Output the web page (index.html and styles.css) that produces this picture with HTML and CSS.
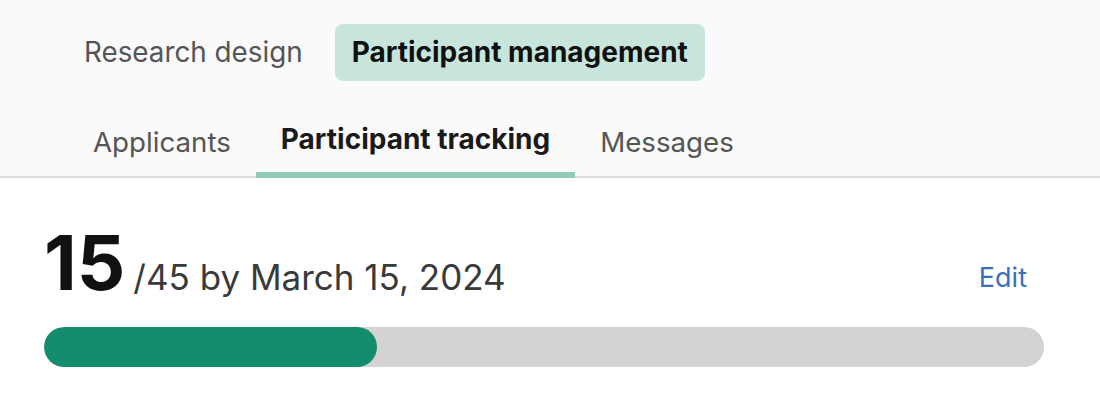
FILE: index.html
```html
<!DOCTYPE html>
<html lang="en">
<head>
    <meta charset="UTF-8">
    <title>Participant tracking</title>
    <link rel="stylesheet" href="styles.css">
</head>
<body>
    <header class="header">
        <nav class="top-tabs">
            <a class="top-tab">Research design</a>
            <a class="top-tab active">Participant management</a>
        </nav>
        <nav class="sub-tabs">
            <a class="sub-tab">Applicants</a>
            <a class="sub-tab active">Participant tracking</a>
            <a class="sub-tab">Messages</a>
        </nav>
    </header>

    <main class="tracking">
        <div class="summary">
            <div class="count">
                <span class="count-num">15</span>
                <span class="count-goal">/45 by March 15, 2024</span>
            </div>
            <a class="edit">Edit</a>
        </div>
        <div class="progress">
            <div class="progress-fill" style="width: 33.3%"></div>
        </div>
    </main>
</body>
</html>
```

FILE: styles.css
```css
body {
    margin: 0;
    font-family: 'Inter', 'Liberation Sans', sans-serif;
    background: #ffffff;
    color: #222;
}

.header {
    background: #fafafa;
    border-bottom: 2px solid #dedede;
    padding-top: 24px;
}

.top-tabs {
    display: flex;
    gap: 15px;
    padding-left: 67px;
}
.top-tab {
    font-size: 27.8px;
    color: #555;
    padding: 0 17px;
    height: 57px;
    line-height: 57px;
    border-radius: 8px;
}
.top-tab.active {
    font-size: 28px;
    background: #c7e5db;
    color: #111;
    font-weight: 700;
}

.sub-tabs {
    display: flex;
    padding-left: 68px;
    margin-top: 30px;
}
.sub-tab {
    font-size: 27.7px;
    color: #555;
    padding: 0 25px;
    height: 65px;
    line-height: 63px;
    box-sizing: border-box;
}
.sub-tab.active {
    font-size: 28px;
    color: #1a1a1a;
    font-weight: 700;
    border-bottom: 6px solid #91cbb7;
    line-height: 57px;
    height: 67px;
    margin-bottom: -2px;
}

.tracking {
    padding: 46px 73px 0 44px;
}
.summary {
    display: flex;
    justify-content: space-between;
    align-items: flex-end;
}
.count {
    display: flex;
    align-items: baseline;
    gap: 8px;
}
.count-num {
    font-size: 76px;
    font-weight: 700;
    color: #111;
    line-height: 1;
}
.count-goal {
    font-size: 35px;
    color: #3a3a3a;
}
.edit {
    font-size: 27px;
    color: #3a6fc4;
    margin-bottom: 6px;
}

.progress {
    margin-top: 27px;
    height: 40px;
    width: 1000px;
    border-radius: 20px;
    background: #d3d3d3;
    overflow: hidden;
}
.progress-fill {
    height: 100%;
    background: #148c6e;
    border-radius: 20px;
}
```
